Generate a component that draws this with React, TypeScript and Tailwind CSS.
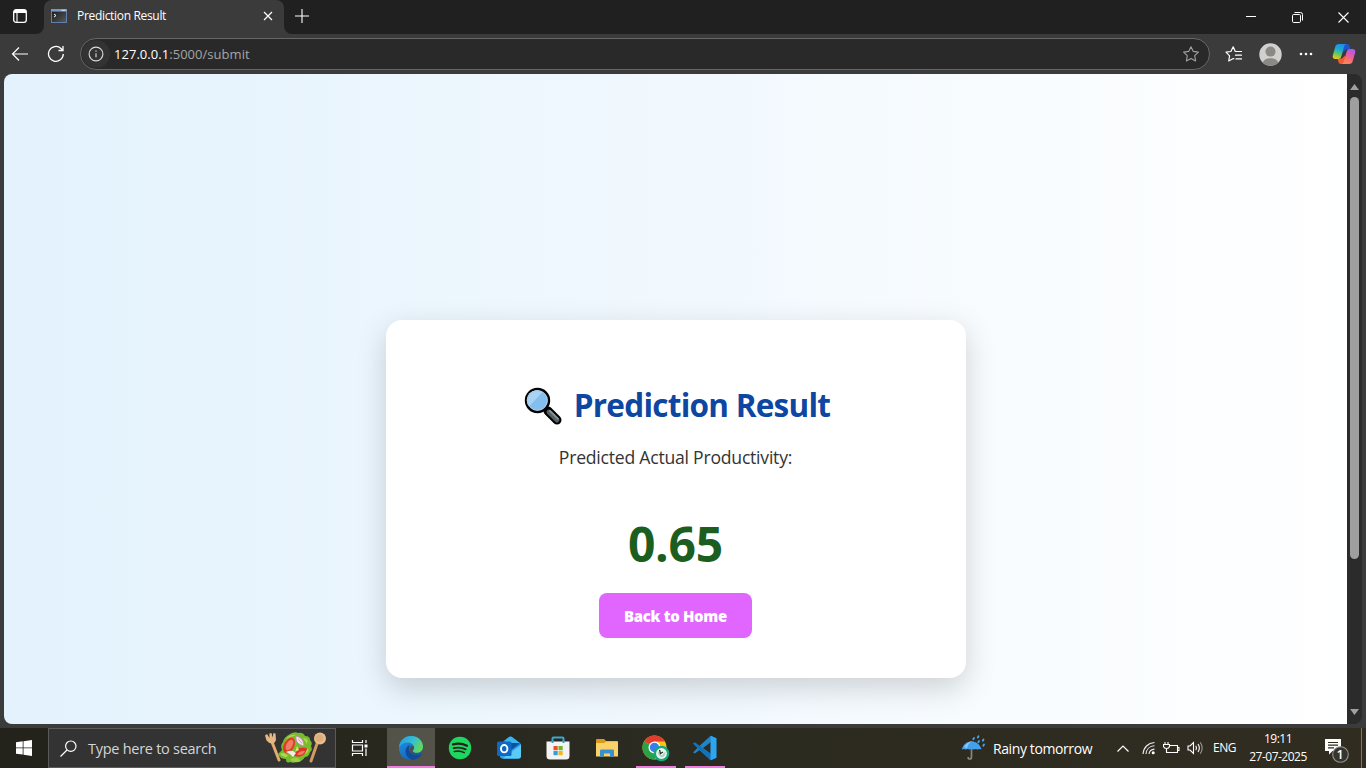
import React from "react";

type P = { className?: string };

const TabsIcon = () => (
  <svg width="16" height="16" viewBox="0 0 16 16" fill="none">
    <rect x="1.7" y="1.7" width="12.6" height="12.6" rx="2.4" stroke="#fff" strokeWidth="1.3" />
    <path d="M1.7 4.2C1.7 2.6 2.6 1.7 4.2 1.7h7.600c1.600 0 2.500.9 2.500 2.500V5H1.7z" fill="#fff" />
    <path d="M5 4.5v9.800" stroke="#fff" strokeWidth="1.100" />
  </svg>
);

const TerminalIcon = () => (
  <svg width="16" height="14" viewBox="0 0 16 14">
    <defs>
      <linearGradient id="term" x1="0" y1="0" x2="1" y2="1">
        <stop offset="0" stopColor="#161616" />
        <stop offset="1" stopColor="#5a5a5a" />
      </linearGradient>
    </defs>
    <rect x=".5" y=".5" width="15" height="13" fill="url(#term)" stroke="#5f7fae" />
    <rect x="0" y="0" width="16" height="2.600" fill="#7898c6" />
    <path d="M10.500 1.300h4" stroke="#dbe7f6" strokeWidth="1" />
    <path d="M3 5l2 1.500L3 8" stroke="#fff" fill="none" />
  </svg>
);

const Star = ({ className }: P) => (
  <svg className={className} width="18" height="18" viewBox="0 0 18 18" fill="none" stroke="currentColor" strokeWidth="1.1" strokeLinejoin="round">
    <path d="M9 1.700l2.300 4.700 5.100.7-3.700 3.600.9 5.200L9 13.400l-4.600 2.500.9-5.200L1.600 7.100l5.100-.7z" />
  </svg>
);

const FavIcon = () => (
  <svg width="18" height="18" viewBox="0 0 18 18" fill="none" stroke="#fff" strokeWidth="1.200" strokeLinejoin="round" strokeLinecap="round">
    <path d="M16.500 6.500H10.300L8.200 1.800 5.900 6.500 1 7.200l3.600 3.600-.9 5.200 4.600-2.500.5.3" />
    <path d="M10.500 10.200h6M11 13.900h5.500" />
  </svg>
);

const Avatar = () => (
  <svg width="23" height="23" viewBox="0 0 23 23">
    <defs><clipPath id="av"><circle cx="11.500" cy="11.500" r="11.200" /></clipPath></defs>
    <g clipPath="url(#av)">
      <rect width="23" height="23" fill="#d2d0ce" />
      <circle cx="11.500" cy="8.600" r="5" fill="#8b8885" />
      <ellipse cx="11.500" cy="20" rx="7.600" ry="4.800" fill="#8b8885" />
    </g>
  </svg>
);

const Copilot = () => (
  <svg width="24" height="22" viewBox="0 0 24 22">
    <defs>
      <linearGradient id="cpa" x1=".6" y1="0" x2=".3" y2="1">
        <stop offset="0" stopColor="#1b8fe8" /><stop offset=".35" stopColor="#1ba9d8" />
        <stop offset=".65" stopColor="#5cc46b" /><stop offset="1" stopColor="#f2c80f" />
      </linearGradient>
      <linearGradient id="cpb" x1=".7" y1="0" x2=".3" y2="1">
        <stop offset="0" stopColor="#a55cf0" /><stop offset=".45" stopColor="#ee5c9d" />
        <stop offset="1" stopColor="#ff8a45" />
      </linearGradient>
    </defs>
    <path d="M11 1h4c1.500 0 2.200.8 2.600 2.200l.9 3.300H14l-3 3z" fill="#2353cb" />
    <path d="M13 21H9c-1.500 0-2.200-.8-2.600-2.200l-.9-3.300H10l3-3z" fill="#ef5c36" />
    <path d="M6.800 1h7.700c-1.500.2-2 1.300-2.500 3L9.600 12.500c-.7 2.400-1.500 3.500-3.500 3.500H3.300C1.300 16 .3 14.800.8 12.500L3.300 3.700C3.800 2 5 1 6.800 1z" fill="url(#cpa)" />
    <path d="M17.200 21H9.500c1.500-.2 2-1.300 2.500-3l2.400-8.500C15.100 7.100 15.900 6 17.900 6h2.800c2 0 3 1.200 2.500 3.500l-2.500 8.800c-.5 1.700-1.700 2.700-3.500 2.700z" fill="url(#cpb)" />
  </svg>
);

const Magnifier = () => (
  <svg width="38" height="38" viewBox="0 0 38 38">
    <path d="M24 24L33 33" stroke="#000" strokeWidth="9" strokeLinecap="round" />
    <path d="M20 20L25 25" stroke="#000" strokeWidth="4" />
    <path d="M25 25L33 33" stroke="#566063" strokeWidth="4.800" strokeLinecap="round" />
    <path d="M26 24L34 31.800" stroke="#859498" strokeWidth="1.800" strokeLinecap="round" />
    <circle cx="13.500" cy="13.500" r="11.500" fill="#83beec" stroke="#000" strokeWidth="2.400" />
    <path d="M5 19.500L18.500 5A10 10 0 0 0 5 19.500z" fill="#a9d3f5" />
    <circle cx="13.500" cy="13.500" r="9.800" fill="none" stroke="#a6cfeb" strokeWidth="1" />
  </svg>
);

const Salad = () => (
  <svg width="64" height="34" viewBox="0 0 64 34">
    <path d="M8 11l7 18" stroke="#e0aa70" strokeWidth="3" strokeLinecap="round" />
    <path d="M1 4.500L3 3l2.500 4L5.300 2.500 7.500 2l1 4.500L9.500 2l2 .5.500 6.500q-1.500 4-4.500 3.500T2.500 9.500z" fill="#e6b683" />
    <path d="M54 10l-7 20" stroke="#d59a5d" strokeWidth="3" strokeLinecap="round" />
    <ellipse cx="56" cy="7.500" rx="6" ry="6" fill="#e9bd8b" />
    <ellipse cx="55.500" cy="7" rx="4" ry="3.800" fill="#dcae7b" />
    <path d="M14 23q2-2 4-4-2-5 1-8 1-5 7-8 5-3 8-1 5-1 7 3 5 0 5 4 3 3 1 6 2 4-1 6-1 5-5 5-3 5-7 4-4 3-8 1-4 2-4-3-6 0-8-5z" fill="#79bb2c" />
    <path d="M16 23q5-3 8 2-3 3-8-2zM39 7q6 0 4 6M44 17q2 5-4 6M22 8q4-5 10-4" fill="#a9da4e" />
    <path d="M26 29q3-3 8-2l3 3q-5 3-11-1z" fill="#9bd044" />
    <ellipse cx="25" cy="14.500" rx="5.200" ry="8.500" transform="rotate(28 25 14.500)" fill="#df3c2c" />
    <ellipse cx="25.500" cy="14" rx="3" ry="5.800" transform="rotate(28 25.500 14)" fill="#f07e60" />
    <path d="M29 24c2-6 7-9 14-7-1 7-7 11-14 7z" fill="#dc3527" />
    <path d="M33 23.500c2-3 5-4 8-3.500-1 3-4 5-8 3.500z" fill="#f07c60" />
    <path d="M32 5c5 1 8 5 8 10-5-1-9-4-8-10z" fill="#f6e6ee" stroke="#c388b0" />
    <path d="M34 7.500l4 5" stroke="#c388b0" strokeWidth=".8" />
    <path d="M22 21q6-3 10 1l-3 4-3-3z" fill="#f8e9e4" />
    <path d="M33 15l2 4-4 2z" fill="#c8ea7c" />
  </svg>
);

const TaskView = () => (
  <svg width="18" height="16" viewBox="0 0 18 16" fill="none" stroke="#fff" strokeWidth="1.200">
    <path d="M1.500 0v2.500h10V0M1.500 16v-2.500h10V16M1.500 5h10v6h-10zM15 0v3M15 8.500V16" />
    <rect x="13.500" y="4.500" width="3" height="3" fill="#fff" stroke="none" />
  </svg>
);

const Edge = () => (
  <svg width="26" height="26" viewBox="0 0 26 26">
    <defs>
      <linearGradient id="eg" x1="0" y1=".3" x2="1" y2=".7">
        <stop offset="0" stopColor="#2a9fe0" /><stop offset=".5" stopColor="#35bfd0" /><stop offset="1" stopColor="#6bdc45" />
      </linearGradient>
      <linearGradient id="eb" x1="0" y1="0" x2=".8" y2="1">
        <stop offset="0" stopColor="#2295e4" /><stop offset="1" stopColor="#0f5cb4" />
      </linearGradient>
    </defs>
    <path d="M1 13C1 6 6 1 13 1s12 5 12 11c0 4-2 6-4 6l2.500 1.500C21.500 23 17.500 25 13 25 6 25 1 20 1 13z" fill="url(#eb)" />
    <path d="M1 12.500C1.500 5.500 7 1 13 1c7 0 12 5 12 10.500 0 4-3 6.300-6.200 6.300-2.500 0-4-.8-4-1.800 0-.8 1.200-1.200 1.200-3.200 0-3.300-3-5.300-6.500-5.300C5.500 7.500 2.500 9.500 1 12.500z" fill="url(#eg)" />
    <path d="M10.800 10.500c-5 2.500-4.500 11.500 3.200 14.400 4-.2 7.500-2.200 9.500-5.400.3-.6 0-.8-.5-.6-6 2.500-11.500-.4-12-4.400-.1-1.500.3-2.700 1-3.700z" fill="#114a9a" />
    <path d="M14.600 16.200c.8 1.800 4.600 3 8 1.500-2 1.400-3.600 2-5.600 1.900-3.500-.3-5.500-2.600-5.300-5.100.3-2 1.300-3.300 3-3.700 1 .7 1.400 1.600 1.200 2.600-.2 1.200-1.500 1.600-1.300 2.800z" fill="#4b4f4c" />
  </svg>
);

const Spotify = () => (
  <svg width="24" height="24" viewBox="0 0 24 24">
    <circle cx="12" cy="12" r="11.200" fill="#1ed760" />
    <g fill="none" stroke="#23231d" strokeLinecap="round">
      <path d="M5 8.400c4.800-1.400 9.700-.9 14 1.400" strokeWidth="2.200" />
      <path d="M5.700 12.200c4.200-1.200 8.300-.7 12 1.200" strokeWidth="1.800" />
      <path d="M6.300 15.600c3.600-.9 7-.6 10 1.100" strokeWidth="1.500" />
    </g>
  </svg>
);

const Outlook = () => (
  <svg width="26" height="24" viewBox="0 0 26 24">
    <path d="M4 8l9-7q1.500-.8 3 0l9 7v12c0 1.500-1 2.500-2.500 2.500h-16C5 22.500 4 21.500 4 20z" fill="#1a7fd4" />
    <path d="M8 5l5-4q1.500-.8 3 0l8.500 6.500L14 9z" fill="#39b4ee" />
    <path d="M13 7h11l-9 7z" fill="#0d4f9e" />
    <path d="M4 14h12l9-6v12c0 1.500-1 2.500-2.500 2.500h-16C5 22.500 4 21.500 4 20z" fill="#2fa5ec" />
    <path d="M7 22.300L25 9v11c0 1.500-1 2.500-2.500 2.500H7z" fill="#5acbf8" />
    <rect x="1" y="5.500" width="14.500" height="14.500" rx="1.500" fill="#0f68c2" />
    <ellipse cx="8.200" cy="12.700" rx="3.200" ry="3.700" fill="none" stroke="#fff" strokeWidth="1.900" />
  </svg>
);

const Store = () => (
  <svg width="24" height="26" viewBox="0 0 24 26">
    <path d="M6.500 7V3.500q0-1 1-1h9q1 0 1 1V7" fill="none" stroke="#3fa5cd" strokeWidth="2" />
    <path d="M.5 6.500h23V21q0 3.500-3.500 3.500H4Q.5 24.500.5 21z" fill="#f3f3f3" />
    <path d="M6.500 6v2M17.500 6v2" stroke="#2e9ccc" strokeWidth="2" />
    <rect x="7.500" y="11" width="4.200" height="4.200" fill="#e8502e" />
    <rect x="12.500" y="11" width="4.200" height="4.200" fill="#75b52b" />
    <rect x="7.500" y="16" width="4.200" height="4.200" fill="#2ba0dd" />
    <rect x="12.500" y="16" width="4.200" height="4.200" fill="#f3b51b" />
  </svg>
);

const Explorer = () => (
  <svg width="24" height="20" viewBox="0 0 24 20">
    <path d="M1 2q0-1 1-1h7l2 2h11q1 0 1 1v5H1z" fill="#d99a1c" />
    <path d="M1 5h8l2-1.500h11q1 0 1 1V18.500H1z" fill="#fbd268" />
    <path d="M5 18.800v-6q0-1.300 1.300-1.300h11.400q1.300 0 1.300 1.300v6h-4V15.500H9v3.300z" fill="#3b8fd1" />
  </svg>
);

const Chrome = () => (
  <svg width="28" height="27" viewBox="0 0 28 27">
    <circle cx="12.500" cy="12.500" r="12" fill="#fbc116" />
    <path d="M12.500 12.500L2.100 6.500a12 12 0 0 1 20.800 0H12.500z" fill="#e33b2e" />
    <path d="M2.100 6.500a12 12 0 0 0 10.400 18l5.200-9-5.200-3z" fill="#2aa147" />
    <circle cx="12.500" cy="12.500" r="6" fill="#fff" />
    <circle cx="12.500" cy="12.500" r="4.700" fill="#3a7ded" />
    <circle cx="19.500" cy="18.500" r="7.800" fill="#16a77b" />
    <circle cx="19.500" cy="18.500" r="5.400" fill="#eef4f0" />
    <path d="M15.500 16.500q3 1 4 4l4-4q0 5-3.500 6-4-1-4.500-6z" fill="#b6cfc2" />
    <path d="M17.500 15l1 3.500 2.500-1.500" stroke="#26332d" strokeWidth="1.300" fill="none" />
  </svg>
);

const VSCode = () => (
  <svg width="26" height="26" viewBox="0 0 24 24">
    <path fillRule="evenodd" d="M17.200.8L22.500 3v18l-5.300 2.200L6.800 13.800 2.700 17 1 16.100 5 12 1 7.900 2.700 7l4.100 3.200zM17.200 6.800L10.200 12l7 5.200z" fill="#1f84cc" />
    <path d="M1 7.900L2.700 7l14.500 10.200v6z" fill="#1272b8" />
    <path d="M17.200.8L22.500 3v18l-5.300 2.200z" fill="#2ea5ef" />
  </svg>
);

const Umbrella = () => (
  <svg width="26" height="26" viewBox="0 0 26 26">
    <path d="M10.500 6v16q0 2-1.700 2t-1.700-2" fill="none" stroke="#858585" strokeWidth="1.700" />
    <path d="M.8 14.500C2.300 9 6 6.500 10.500 6.500S19 9 20.500 14.500q-2-1-4 0-2-1-3.500 0-2.200-1-4.500 0-1.800-1-3.700 0-1.800-1-4 0z" fill="#45a0ec" />
    <path d="M6 13.500q1-5 4.500-7Q6 7 3 12z" fill="#8ac7f8" />
    <path d="M13 3l-.7 1.200M17.500 1.300l-.7 1.200M18 6l-.7 1.200M22.500 4.500l-.7 1.200M23 9.500l-.7 1.200" stroke="#4aa6ef" strokeWidth="1.800" strokeLinecap="round" />
  </svg>
);

const Wifi = () => (
  <svg width="14" height="14" viewBox="0 0 14 14" fill="none" stroke="#eee" strokeWidth="1.100">
    <path d="M1 13C1.500 6.500 6 2 12.500 1.500M4 13c.3-4.500 3.500-8 8.500-8.200M7 13c.3-2.700 2.300-4.700 5.500-4.900" />
    <circle cx="11.200" cy="11.700" r="1.500" fill="#fff" stroke="none" />
  </svg>
);

const Battery = () => (
  <svg width="17" height="13" viewBox="0 0 17 13" fill="none" stroke="#fff" strokeWidth="1.100">
    <path d="M7 3.500h7.500v7H3.500V8M14.500 5.500h1.500v3h-1.500" />
    <path d="M2 0v2.500M5 0v2.500M.5 2.500h6v2q-.5 2-3 2t-3-2zM3.500 6.500V9" />
  </svg>
);

const Volume = () => (
  <svg width="17" height="14" viewBox="0 0 17 14" fill="none" stroke="#fff" strokeWidth="1.100">
    <path d="M1 5h2l3.500-3.500v11L3 9H1z" />
    <path d="M8.800 4.800q1.400 2.200 0 4.400M11 3q2.700 4 0 8" />
    <path d="M13.200 1.300q4 5.700 0 11.400" stroke="#999" />
  </svg>
);

const Notifications = () => (
  <svg width="26" height="26" viewBox="0 0 26 26">
    <path d="M1 1h16v12H8.500L5 16.500V13H1z" fill="#fff" />
    <path d="M4 4.500h10M4 7.200h10M4 9.900h6" stroke="#2c2b20" strokeWidth="1.200" />
    <circle cx="16.500" cy="16.500" r="7.800" fill="#35352f" stroke="#96968f" strokeWidth="1.100" />
    <text x="16.200" y="20.900" fontSize="12.500" fontWeight="600" fill="#fff" textAnchor="middle" fontFamily="Open Sans, sans-serif">1</text>
  </svg>
);

const Pinned = ({ children, active, running }: { children: React.ReactNode; active?: boolean; running?: boolean }) => (
  <div className={`flex h-10 w-12 flex-col items-center ${active ? "bg-[#53534a]" : ""}`}>
    <div className="flex h-[38px] w-full items-center justify-center pt-0.5">{children}</div>
    <div className={`h-0.5 ${active ? "w-12 bg-[#f07ce0]" : running ? "w-10 bg-[#f07ce0]" : "w-10"}`} />
  </div>
);

export default function App() {
  return (
    <div className="flex h-[768px] w-[1366px] flex-col overflow-hidden bg-[#3b3b3b] font-['Open_Sans',sans-serif] whitespace-nowrap">
      <header className="flex h-[34px] shrink-0 text-white">
        <div className="flex w-11 items-center justify-center rounded-br-lg bg-[#202020] pr-1 pb-0.5"><TabsIcon /></div>
        <div className="h-[34px] w-60 bg-[#202020]">
          <div className="flex h-[34px] items-center rounded-t-lg bg-[#3b3b3b] pb-0.5 pl-[7px]">
            <TerminalIcon />
            <span className="ml-[10px] w-[180px] text-[12px] tracking-[-0.32px]">Prediction Result</span>
            <svg width="10" height="10" viewBox="0 0 10 10" stroke="#fff" strokeWidth="1.200" className="ml-[6px]"><path d="M1 1l8 8M9 1L1 9" /></svg>
          </div>
        </div>
        <div className="flex flex-1 rounded-bl-lg bg-[#202020]">
          <div className="flex w-[35px] items-center justify-center pb-[3px]">
            <svg width="14" height="14" viewBox="0 0 14 14" stroke="#fff" strokeWidth="1.100"><path d="M7 0v14M0 7h14" /></svg>
          </div>
          <div className="ml-auto flex w-[138px] items-center">
            <div className="flex w-[46px] justify-center"><svg width="10" height="10" viewBox="0 0 10 10" stroke="#fff"><path d="M0 4.500h10" /></svg></div>
            <div className="flex w-[46px] justify-center"><svg width="11" height="11" viewBox="0 0 11 11" stroke="#fff" fill="none"><rect x=".5" y="2.500" width="8" height="8" rx="1.200" /><path d="M2.500.500h6q2 0 2 2v6" /></svg></div>
            <div className="flex w-[46px] justify-center"><svg width="11" height="11" viewBox="0 0 11 11" stroke="#fff" strokeWidth="1.100"><path d="M.5.500l10 10M10.500.500l-10 10" /></svg></div>
          </div>
        </div>
      </header>

      <nav className="flex h-10 shrink-0 items-center">
        <div className="flex w-10 justify-center">
          <svg width="18" height="16" viewBox="0 0 18 16" fill="none" stroke="#fff" strokeWidth="1.200"><path d="M17 8H1.500M8 1.500L1.500 8 8 14.500" /></svg>
        </div>
        <div className="flex w-8 justify-center">
          <svg width="18" height="18" viewBox="0 0 18 18" fill="none" stroke="#fff" strokeWidth="1.300"><path d="M16.300 9A7.400 7.400 0 1 1 14 3.500L15.800 5.200M16 1v4.500h-4.500" /></svg>
        </div>
        <div className="ml-2 flex h-8 w-[1130px] items-center rounded-full border border-[#676767] bg-[#292929] pl-px">
          <div className="flex size-7 items-center justify-center rounded-full bg-[#333]">
            <svg width="16" height="16" viewBox="0 0 16 16" fill="none" stroke="#ddd" strokeWidth="1.100"><circle cx="8" cy="8" r="6.900" /><path d="M8 7.200v4M8 4.500v1.300" /></svg>
          </div>
          <span className="ml-1 pt-px text-[13px] tracking-[0.04px] text-[#a5a5a5]"><span className="text-white">127.0.0.1</span>:5000/submit</span>
          <Star className="mr-[9px] ml-auto text-[#a0a0a0]" />
        </div>
        <div className="flex flex-1 items-center pl-[15px]">
          <FavIcon />
          <div className="ml-[16px]"><Avatar /></div>
          <svg className="ml-[17px]" width="14" height="4" viewBox="0 0 14 4" fill="#fff"><circle cx="2" cy="2" r="1.300" /><circle cx="7" cy="2" r="1.300" /><circle cx="12" cy="2" r="1.300" /></svg>
          <div className="ml-[19px]"><Copilot /></div>
        </div>
      </nav>

      <div className="flex h-[650px] shrink-0 pr-1 pl-1">
        <main className="flex w-[1343px] flex-col items-center overflow-hidden rounded-l-lg bg-linear-to-r from-[#e3f2fd] to-white pt-[246px]">
          <section className="flex h-[358px] w-[580px] shrink-0 flex-col items-center rounded-2xl bg-white pt-[61px] shadow-[0_10px_30px_rgba(0,0,0,0.17)]">
            <h1 className="flex h-12 items-center pl-[3px] text-[31.500px] font-bold tracking-[-0.75px] text-[#0d47a1]">
              <span className="pt-[2px]"><Magnifier /></span><span className="ml-[12px]">Prediction Result</span>
            </h1>
            <p className="mt-[14px] h-7 text-[17.600px] leading-7 tracking-[-0.23px] text-[#333]">Predicted Actual Productivity:</p>
            <p className="mt-[41px] h-16 text-[48px] leading-[64px] font-bold tracking-[-0.2px] text-[#1b5e20]">0.65</p>
            <button className="mt-[17px] h-[45px] w-[153px] rounded-lg bg-[#e066ff] pt-px text-[15px] font-extrabold tracking-[-0.35px] text-white">Back to Home</button>
          </section>
        </main>
        <aside className="flex w-[15px] flex-col items-center rounded-r-lg bg-[#2b2b2b] pt-[10px] pb-[9px]">
          <svg width="9" height="6" viewBox="0 0 9 6" fill="#a0a0a0"><path d="M4.500 0L9 6H0z" /></svg>
          <div className="mt-[7px] h-[462px] w-[9px] rounded-full bg-[#9f9f9f]" />
          <svg className="mt-auto" width="9" height="6" viewBox="0 0 9 6" fill="#a0a0a0"><path d="M0 0h9L4.500 6z" /></svg>
        </aside>
      </div>
      <div className="h-1 shrink-0" />

      <footer className="flex h-10 shrink-0 bg-linear-to-r from-[#23231b] via-[#2c2b21] to-[#302c20] text-white">
        <div className="flex w-12 items-center justify-center">
          <svg width="16" height="16" viewBox="0 0 16 16" fill="#fff"><path d="M0 2.200l6.700-.9v6.200H0zM7.500 1.200L16 0v7.500H7.500zM0 8.300h6.700v6.300L0 13.700zM7.500 8.300H16V16l-8.500-1.200z" /></svg>
        </div>
        <div className="flex w-72 items-center border border-[#5b5b5b] bg-[#333] pl-[11px]">
          <svg width="17" height="17" viewBox="0 0 17 17" fill="none" stroke="#fff" strokeWidth="1.200"><circle cx="10.800" cy="6.200" r="5.200" /><path d="M7 10L.5 16.500" /></svg>
          <span className="ml-[11px] w-[176px] pt-px text-[14.500px] tracking-[-0.27px] text-[#d5d5d5]">Type here to search</span>
          <Salad />
        </div>
        <div className="flex w-[51px] items-center pl-[15px]"><TaskView /></div>
        <div className="flex gap-px">
          <Pinned active><Edge /></Pinned>
          <Pinned><Spotify /></Pinned>
          <Pinned><Outlook /></Pinned>
          <Pinned><Store /></Pinned>
          <Pinned><Explorer /></Pinned>
          <Pinned running><Chrome /></Pinned>
          <Pinned running><VSCode /></Pinned>
        </div>
        <div className="ml-auto flex items-center">
          <Umbrella />
          <span className="ml-[6px] w-[99px] text-[14px] tracking-[-0.4px]">Rainy tomorrow</span>
          <svg className="ml-[25px]" width="12" height="7" viewBox="0 0 12 7" fill="none" stroke="#fff" strokeWidth="1.200"><path d="M.5 6.500L6 1l5.500 5.500" /></svg>
          <div className="ml-[13px]"><Wifi /></div>
          <div className="ml-[7px]"><Battery /></div>
          <div className="ml-[7px]"><Volume /></div>
          <span className="ml-[9px] w-[24px] text-[12px] tracking-[-0.5px]">ENG</span>
          <div className="ml-[11px] flex w-[60px] flex-col items-center text-[12px] leading-[18px] tracking-[-0.5px]"><span>19:11</span><span>27-07-2025</span></div>
          <div className="ml-[16px] pt-[5px]"><Notifications /></div>
          <div className="ml-[11px] h-10 w-px bg-[#777]" />
          <div className="w-1" />
        </div>
      </footer>
    </div>
  );
}
